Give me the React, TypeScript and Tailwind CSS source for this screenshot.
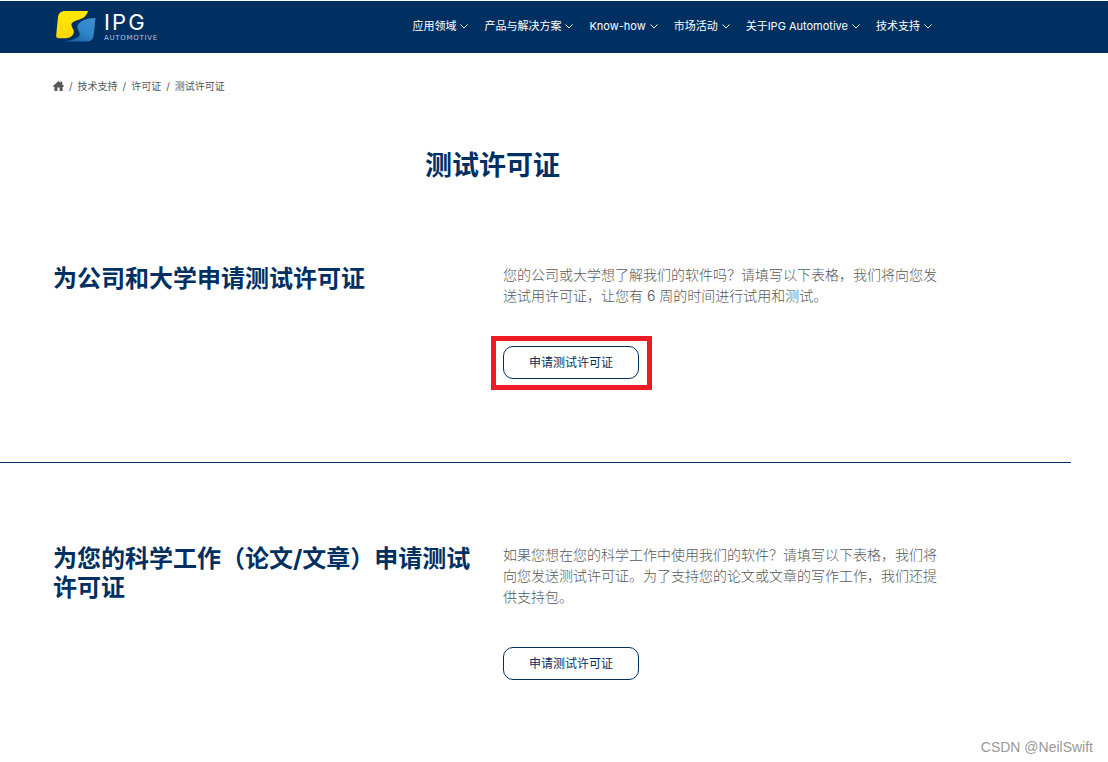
type NavItem = { label: string; key: string };

const navItems: NavItem[] = [
  { key: "applications", label: "应用领域" },
  { key: "products", label: "产品与解决方案" },
  { key: "knowhow", label: "Know-how" },
  { key: "events", label: "市场活动" },
  { key: "about", label: "关于IPG Automotive" },
  { key: "support", label: "技术支持" },
];

const headingClass = "max-w-[432px] text-2xl leading-[29px] font-bold text-[#002f62]";
const textClass = "max-w-[434px] text-sm leading-[21px] font-light text-[#575756]";

function Logo() {
  return (
    <a href="#" className="flex items-center gap-2 text-white">
      <svg width="40" height="31" viewBox="0 0 40 31" aria-hidden="true">
        <defs>
          <linearGradient id="logoBlue" x1="0.9" y1="0" x2="0.2" y2="1">
            <stop offset="0" stopColor="#3f8fce" />
            <stop offset="0.5" stopColor="#2f86c8" />
            <stop offset="1" stopColor="#1b62a6" />
          </linearGradient>
          <linearGradient id="logoYellow" x1="0" y1="0" x2="0" y2="1">
            <stop offset="0" stopColor="#ffe900" />
            <stop offset="1" stopColor="#ffd500" />
          </linearGradient>
        </defs>
        <path
          fill="url(#logoYellow)"
          d="M9 0H32C30.5 5 28 7.2 22 9C17 10.5 15 12 15.5 14.5C16 17.5 19 19 17.5 22.5C16 26 13 27.3 8 27.3H3C0.8 27.3 0 26.2 0.2 24L2 6C2.5 2.2 5 0 9 0Z"
        />
        <path
          fill="url(#logoBlue)"
          d="M39.5 7L37.7 24C37.3 28.2 35 30.5 31 30.5H8C14 29.5 21.5 28 23.5 24.5C25 21.5 20.5 18.5 21.5 15C23 10 31 7 39.5 7Z"
        />
      </svg>
      <span className="flex flex-col gap-1">
        <span className="text-[22px] leading-5 tracking-widest">IPG</span>
        <span className="font-['DejaVu_Sans'] text-[7px] leading-1 tracking-widest text-[#b8c6d6]">AUTOMOTIVE</span>
      </span>
    </a>
  );
}

function ChevronIcon() {
  return (
    <svg width="8" height="5" viewBox="0 0 8 5" fill="none" stroke="currentColor" aria-hidden="true">
      <path d="M0.5 0.5L4 4L7.5 0.5" />
    </svg>
  );
}

function HomeIcon() {
  return (
    <svg width="11" height="10" viewBox="0 0 11 10" fill="currentColor" aria-hidden="true">
      <path d="M5.5 0L7.5 1.8V0.6H9.2V3.3L11 5V5.7H9.6V10H6.6V6.6H4.4V10H1.4V5.7H0V5Z" />
    </svg>
  );
}

function Header() {
  return (
    <header className="mt-px flex h-[52px] items-center bg-[#002f62] pr-[176px] pb-0.5 pl-14">
      <Logo />
      <nav className="ml-auto flex items-center gap-4">
        {navItems.map((item) => (
          <button
            key={item.key}
            type="button"
            className="flex cursor-pointer items-center gap-1 text-[11px] leading-4 whitespace-nowrap text-white"
          >
            {item.label}
            <ChevronIcon />
          </button>
        ))}
      </nav>
    </header>
  );
}

function Breadcrumb() {
  return (
    <nav aria-label="Breadcrumb" className="pt-[25px] text-[10px] leading-4 text-[#575756]">
      <ol className="flex items-center gap-[5px]">
        <li>
          <a href="#" aria-label="Home">
            <HomeIcon />
          </a>
        </li>
        <li aria-hidden="true">/</li>
        <li>
          <a href="#">技术支持</a>
        </li>
        <li aria-hidden="true">/</li>
        <li>
          <a href="#">许可证</a>
        </li>
        <li aria-hidden="true">/</li>
        <li>测试许可证</li>
      </ol>
    </nav>
  );
}

function LicenseSection({ title, text, highlight }: { title: string; text: string; highlight?: boolean }) {
  return (
    <section className="grid grid-cols-[1fr_429px] gap-5 pr-[176px] pl-[53px]">
      <h2 className={headingClass}>{title}</h2>
      <div>
        <p className={`${textClass} -mr-2`}>{text}</p>
        <div className="relative mt-10 w-fit">
          <button
            type="button"
            className="block cursor-pointer rounded-[10px] border border-[#002f62] px-[25px] py-[7px] text-xs leading-[17px] text-[#002f62]"
          >
            申请测试许可证
          </button>
          {highlight && (
            <div className="pointer-events-none absolute -top-[10px] -right-[13px] -bottom-[11px] -left-3 border-5 border-[#ed1c24]" />
          )}
        </div>
      </div>
    </section>
  );
}

export default function App() {
  return (
    <div className="relative min-h-screen overflow-hidden bg-white font-['Inter','Noto_Sans_CJK_SC',sans-serif]">
      <Header />
      <main className="pb-[82px]">
        <div className="pr-[176px] pl-[53px]">
          <Breadcrumb />
          <h1 className="mt-14 text-center text-[27px] leading-8 font-bold text-[#002f62]">测试许可证</h1>
        </div>
        <div className="mt-[82px]">
          <LicenseSection
            title="为公司和大学申请测试许可证"
            text="您的公司或大学想了解我们的软件吗？请填写以下表格，我们将向您发送试用许可证，让您有 6 周的时间进行试用和测试。"
            highlight
          />
          <hr className="mt-[83px] mr-[37px] mb-[81px] border-[#002f62]" />
          <LicenseSection
            title="为您的科学工作（论文/文章）申请测试许可证"
            text="如果您想在您的科学工作中使用我们的软件？请填写以下表格，我们将向您发送测试许可证。为了支持您的论文或文章的写作工作，我们还提供支持包。"
          />
        </div>
      </main>
      <p className="absolute right-[15px] bottom-[5px] font-['Liberation_Sans'] text-sm text-[#999999]">
        CSDN @NeilSwift
      </p>
    </div>
  );
}
